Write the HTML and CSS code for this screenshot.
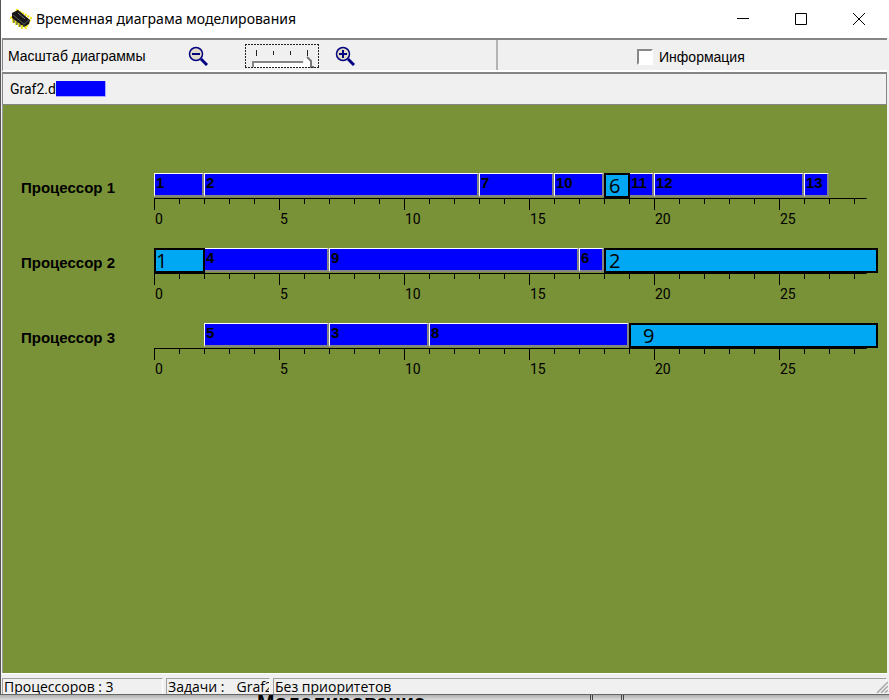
FILE: index.html
```html
<!DOCTYPE html>
<html lang="ru">
<head>
<meta charset="utf-8">
<title>Временная диаграма моделирования</title>
<link rel="stylesheet" href="styles.css">
</head>
<body>
<main class="window">
  <header class="titlebar">
    <svg class="app-icon" width="22" height="22" viewBox="0 0 22 22" aria-hidden="true">
      <path d="M7 2 21 10 16 20 1 10Z" fill="none" stroke="#f2e500" stroke-width="2" stroke-dasharray="2 1"/>
      <path d="M2 5 8 2 20 12 19 16 14 19 2 10Z" fill="#161616"/>
      <path d="M3 7 14 16 19 12M14 16v3" fill="none" stroke="#555"/>
      <path d="M8 5 15 11" stroke="#777"/>
      <path d="M3 11v4M6 13v4M9 15v4M12 17v4" stroke="#e8dc00" stroke-width="1.500"/>
      <path d="M4 11v4M7 13v4M10 15v4" stroke="#333"/>
    </svg>
    <h1 class="title">Временная диаграма моделирования</h1>
    <div class="controls">
      <button class="control" aria-label="Свернуть"><svg width="12" height="12"><path d="M0 5.500h12" stroke="#000"/></svg></button>
      <button class="control" aria-label="Развернуть"><svg width="12" height="12"><path d="M.5.500h11v11h-11z" fill="none" stroke="#000"/></svg></button>
      <button class="control" aria-label="Закрыть"><svg width="12" height="12"><path d="M0 0 12 12M12 0 0 12" stroke="#000"/></svg></button>
    </div>
  </header>

  <div class="toolbar">
    <div class="scale">
      <label class="scale-label" for="scale">Масштаб диаграммы</label>
      <button class="zoom" aria-label="Уменьшить">
        <svg width="20" height="20" viewBox="0 0 20 20"><path d="m13 13 6 6" stroke="#000080" stroke-width="3"/><circle cx="8" cy="8" r="6.500" fill="#e2dac8" stroke="#000080" stroke-width="1.500"/><path d="M4 8h8" stroke="#000080" stroke-width="2"/></svg>
      </button>
      <div class="slider">
        <svg width="74" height="24" viewBox="0 0 74 24" aria-hidden="true">
          <path d="M11.500 6v6M28.500 7v4M45.500 7v4M62.500 6v6" stroke="#222"/>
          <path d="M9 19h50v5H9z" fill="#fff"/>
          <path d="M8 23v-5h50" fill="none" stroke="#858585" stroke-width="2"/>
          <path d="M59 23v-7l3-3 3 3v7z" fill="#fff"/>
          <path d="m62 13 4 4v6h3" fill="none" stroke="#777" stroke-width="2"/>
          <path d="M0 .5h74M0 23.500h74M.5 0v24M73.500 0v24" fill="none" stroke="#222" stroke-dasharray="2 1"/>
        </svg>
        <input class="range" id="scale" type="range" min="1" max="4" value="4">
      </div>
      <button class="zoom" aria-label="Увеличить">
        <svg width="20" height="20" viewBox="0 0 20 20"><path d="m13 13 6 6" stroke="#000080" stroke-width="3"/><circle cx="8" cy="8" r="6.500" fill="#e2dac8" stroke="#000080" stroke-width="1.500"/><path d="M4 8h8M8 4v8" stroke="#000080" stroke-width="2"/></svg>
      </button>
    </div>
    <label class="info"><input class="check" type="checkbox">Информация</label>
  </div>

  <div class="legend"><span>Graf2.d</span><span class="swatch"></span></div>

  <section class="chart">
    <div class="row">
      <h2 class="name">Процессор 1</h2>
      <div class="timeline">
        <div class="bars">
          <div class="bar s0 w2">1</div><div class="bar s2 w11">2</div><div class="bar s13 w3">7</div><div class="bar s16 w2">10</div><div class="mark s18 w1">6</div><div class="bar s19 w1">11</div><div class="bar s20 w6">12</div><div class="bar s26 w1">13</div>
        </div>
        <div class="axis"><span>0</span><span>5</span><span>10</span><span>15</span><span>20</span><span>25</span></div>
      </div>
    </div>
    <div class="row">
      <h2 class="name">Процессор 2</h2>
      <div class="timeline">
        <div class="bars">
          <div class="mark flush s0 w2">1</div><div class="bar s2 w5">4</div><div class="bar s7 w10">9</div><div class="bar s17 w1">6</div><div class="mark s18 w11">2</div>
        </div>
        <div class="axis"><span>0</span><span>5</span><span>10</span><span>15</span><span>20</span><span>25</span></div>
      </div>
    </div>
    <div class="row">
      <h2 class="name">Процессор 3</h2>
      <div class="timeline">
        <div class="bars">
          <div class="bar s2 w5">5</div><div class="bar s7 w4">3</div><div class="bar s11 w8">8</div><div class="mark inset s19 w10">9</div>
        </div>
        <div class="axis"><span>0</span><span>5</span><span>10</span><span>15</span><span>20</span><span>25</span></div>
      </div>
    </div>
  </section>

  <footer class="status">
    <div class="panel count">Процессоров : 3</div>
    <div class="panel tasks"><span>Задачи :</span><span>Graf2</span></div>
    <div class="panel mode">Без приоритетов</div>
    <svg class="grip" width="12" height="12" aria-hidden="true"><path d="M1 12 12 1M5 12l7-7M9 12l3-3" stroke="#a5a5a5" stroke-width="1.500"/></svg>
  </footer>
</main>
<div class="behind"><span class="behind-text">Моделирование</span><span class="behind-edge"></span></div>
</body>
</html>
```

FILE: styles.css
```css
* {
  box-sizing: border-box;
}

body {
  margin: 0;
  height: 100vh;
  display: flex;
  flex-direction: column;
  overflow: hidden;
  font-family: Roboto, "Liberation Sans", sans-serif;
  font-size: 14px;
  line-height: 16px;
  color: #000;
}

button {
  padding: 0;
  border: 0;
  background: none;
}

svg {
  display: block;
}

.window {
  flex: 1;
  min-height: 0;
  display: flex;
  flex-direction: column;
  border-left: 1px solid #555;
  border-bottom: 1px solid #666;
  background: #f0f0f0;
}

.titlebar {
  flex: none;
  height: 38px;
  display: flex;
  align-items: center;
  padding: 0 1px 0 9px;
  background: #fff;
}

.title {
  margin: 0 0 0 4px;
  font: 400 14px/20px "Noto Sans", sans-serif;
}

.controls {
  display: flex;
  margin-left: auto;
}

.control {
  width: 58px;
  height: 38px;
  display: grid;
  place-items: center;
}

.toolbar {
  flex: none;
  height: 34px;
  display: flex;
  margin: 0 2px 0 1px;
  border-top: 2px solid #858585;
  border-left: 1px solid #858585;
  border-bottom: 2px solid #fff;
  font: 400 14px/16px "Liberation Sans", sans-serif;
}

.scale {
  flex: 0 0 56%;
  display: flex;
  align-items: center;
  padding: 2px 0 0 5px;
  border-right: 2px solid #b4b4b4;
}

.scale-label {
  width: 180px;
}

.zoom {
  width: 20px;
  height: 20px;
}

.slider {
  position: relative;
  margin: 0 16px 0 37px;
}

.range {
  position: absolute;
  inset: 0;
  width: 100%;
  height: 100%;
  margin: 0;
  opacity: 0;
}

.info {
  display: flex;
  align-items: center;
  gap: 6px;
  padding: 4px 0 0 139px;
}

.check {
  appearance: none;
  width: 16px;
  height: 16px;
  margin: 0;
  border: 2px solid;
  border-color: #888 #fff #fff #888;
  background: #fff;
}

.legend {
  flex: none;
  height: 33px;
  display: flex;
  align-items: center;
  margin: 0 2px 0 1px;
  padding-left: 7px;
  border: 1px solid #858585;
  border-top-width: 2px;
}

.swatch {
  width: 50px;
  height: 16px;
  border: 1px solid #aaf;
  border-width: 0 1px 1px 0;
  background: #00f;
}

.chart {
  flex: 1;
  min-height: 0;
  margin: 0 2px 0 1px;
  padding: 68px 8px 0 18px;
  border-left: 1px solid #999;
  background: #799137;
}

.row {
  height: 75px;
  display: flex;
}

.name {
  width: 133px;
  margin: 7px 0 0;
  font: 700 15px/16px "Liberation Sans", sans-serif;
}

.timeline {
  flex: 1;
}

.bars,
.axis {
  display: grid;
  grid-template-columns: repeat(29, 1fr);
}

.bars {
  height: 25px;
}

.bar {
  height: 24px;
  padding-left: 1px;
  border: 2px solid #fff;
  border-width: 1px 2px 2px 1px;
  border-right-color: #858585;
  border-bottom-color: #858585;
  background: #00f;
  font: 700 15px/18px "Liberation Sans", sans-serif;
}

.mark {
  z-index: 1;
  height: 25px;
  margin-right: -1px;
  padding-left: 3px;
  border: 2px solid #000;
  background: #00a8f4;
  font: 400 20px/22px "Open Sans", sans-serif;
}

.mark.w10,
.mark.w11 {
  margin-right: 1px;
}

.mark.flush {
  padding-left: 0;
}

.mark.inset {
  padding-left: 12px;
}

.axis {
  height: 30px;
  padding-top: 13px;
  background:
    linear-gradient(#000, #000) 0 0 / 98.3% 1px no-repeat,
    repeating-linear-gradient(to right, #000 0 1px, transparent 1px calc(100% / 29)) 0 0 / 100% 6px no-repeat,
    repeating-linear-gradient(to right, #000 0 1px, transparent 1px calc(100% / 5.8)) 0 0 / 100% 12px no-repeat;
}

.axis span {
  grid-column: span 5;
  padding-left: 1px;
}

.axis span:last-child {
  grid-column: span 4;
}

.s0 { grid-column-start: 1; }
.s2 { grid-column-start: 3; }
.s7 { grid-column-start: 8; }
.s11 { grid-column-start: 12; }
.s13 { grid-column-start: 14; }
.s16 { grid-column-start: 17; }
.s17 { grid-column-start: 18; }
.s18 { grid-column-start: 19; }
.s19 { grid-column-start: 20; }
.s20 { grid-column-start: 21; }
.s26 { grid-column-start: 27; }

.w1 { grid-column-end: span 1; }
.w2 { grid-column-end: span 2; }
.w3 { grid-column-end: span 3; }
.w4 { grid-column-end: span 4; }
.w5 { grid-column-end: span 5; }
.w6 { grid-column-end: span 6; }
.w8 { grid-column-end: span 8; }
.w10 { grid-column-end: span 10; }
.w11 { grid-column-end: span 11; }

.status {
  flex: none;
  height: 21px;
  position: relative;
  display: flex;
  gap: 3px;
  padding: 4px 2px 0 1px;
  border-top: 1px solid #fff;
  font: 400 14px/16px "Open Sans", sans-serif;
}

.panel {
  padding-left: 1px;
  border-top: 1px solid #a0a0a0;
  border-left: 1px solid #a0a0a0;
  border-right: 1px solid #fff;
  white-space: pre;
  overflow: hidden;
}

.count {
  width: 161px;
}

.tasks {
  width: 104px;
  display: flex;
  gap: 12px;
}

.mode {
  flex: 1;
}

.grip {
  position: absolute;
  right: 1px;
  bottom: 1px;
}

.behind {
  flex: none;
  height: 5px;
  display: flex;
  overflow: hidden;
  padding-left: 257px;
  background: linear-gradient(#b0b0b0, #dcdcdc);
}

.behind-text {
  width: 333px;
  font: 700 21px/14px "Liberation Sans", sans-serif;
}

.behind-edge {
  width: 34px;
  border: 3px double #444;
  border-width: 0 3px;
}
```
